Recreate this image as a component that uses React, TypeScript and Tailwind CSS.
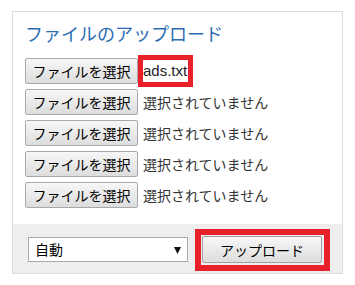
const files = ["ads.txt", null, null, null, null];

function FileButton() {
  return (
    <div className="flex h-[26px] w-[113px] shrink-0 items-center justify-center rounded-[2px] border border-[#a9a9a9] bg-gradient-to-b from-[#f7f7f7] to-[#dddddd] text-[14px] leading-none text-black">
      ファイルを選択
    </div>
  );
}

export default function App() {
  return (
    <div className="h-[285px] w-[355px] bg-white pt-[11px] pl-[12px] font-['Noto_Sans_CJK_JP',sans-serif]">
      <div className="flex h-[263px] w-[331px] flex-col border border-[#dcdcdc] bg-white">
        <div className="pt-[9px] pl-[12px]">
          <h2 className="h-[24px] text-[18px] leading-[24px] text-[#2b6cb4]">ファイルのアップロード</h2>
          <div className="mt-[13px] flex flex-col gap-[5px]">
            {files.map((f, i) => (
              <div key={i} className="flex h-[26px] items-center">
                <FileButton />
                {f ? (
                  <div className="flex h-[32px] w-[55px] shrink-0 items-center border-[5px] border-[#e8202a] bg-white pl-0 font-['Liberation_Sans',sans-serif] text-[15px] text-[#222]">
                    {f}
                  </div>
                ) : (
                  <span className="ml-[5px] text-[14px] text-[#333]">選択されていません</span>
                )}
              </div>
            ))}
          </div>
        </div>

        <div className="mt-auto flex h-[49px] items-center bg-[#eeeeee] pl-[15px]">
          <div className="relative mt-[2px] flex h-[25px] w-[160px] items-center border border-[#a9a9a9] bg-white pl-[6px] text-[14px] text-black">
            自動
            <svg className="absolute right-[6px] top-[9px]" width="7" height="7" viewBox="0 0 7 7">
              <polygon points="0,0 7,0 3.5,7" fill="#111" />
            </svg>
          </div>
          <div className="ml-[7px] mt-[2px] flex h-[42px] w-[135px] items-center border-[6px] border-[#e8202a] pl-[1px]">
            <div className="flex h-[27px] w-[120px] items-center justify-center rounded-[2px] border border-[#a0a0a0] bg-gradient-to-b from-[#f7f7f7] to-[#dddddd] text-[14px] leading-none text-black">
              アップロード
            </div>
          </div>
        </div>
      </div>
    </div>
  );
}
